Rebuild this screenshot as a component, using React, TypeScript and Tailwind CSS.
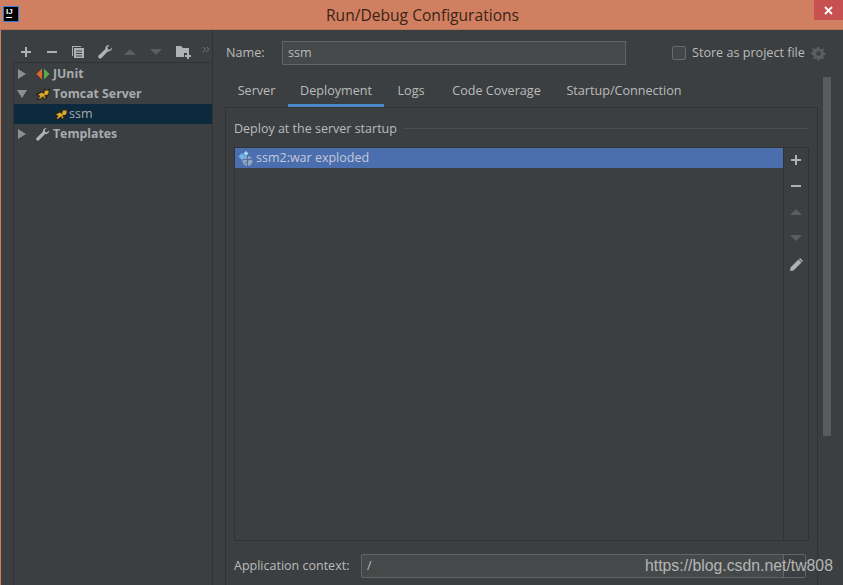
import React from 'react';

const uiFont = 'font-["Open_Sans","Noto_Sans",sans-serif]';

function Plus({ className = '' }: { className?: string }) {
  return (
    <svg width="12" height="12" viewBox="0 0 12 12" className={className}>
      <path d="M5 1h2v4h4v2H7v4H5V7H1V5h4z" fill="#afb1b3" />
    </svg>
  );
}

function Minus() {
  return (
    <svg width="12" height="12" viewBox="0 0 12 12">
      <path d="M1 5h10v2H1z" fill="#afb1b3" />
    </svg>
  );
}

function Triangle({ down = false }: { down?: boolean }) {
  return (
    <svg width="14" height="12" viewBox="0 0 14 12">
      <path d={down ? 'M1 3h12L7 9z' : 'M7 3l6 6H1z'} fill="#5b5d5f" />
    </svg>
  );
}

function Wrench({ size = 16 }: { size?: number }) {
  return (
    <svg width={size} height={size} viewBox="0 0 16 16">
      <path
        d="M15 3.600c.3 2.400-1.800 4.400-4.300 3.800L4.300 14.200c-.6.6-1.700.6-2.300 0l-.4-.4c-.6-.6-.6-1.600 0-2.200l6.800-6.500C7.900 2.900 10 .7 12.400 1l-2 2.200.5 2 2 .5z"
        fill="#afb1b3"
      />
    </svg>
  );
}

function Tomcat() {
  return (
    <svg width="14" height="12" viewBox="0 0 14 12">
      <path d="M8 0l2 1.500h1.500L13.500 0v6l-2 2-1 3.500H7.500L6.500 10 3 12H0l3-3 .5-2L0 7.500V6l5-2.500L8 3z" fill="#26251c" />
      <path d="M9 2.500h3.500v3L11 7H9L8 5.500zM2 6.500l4-2 2 1.500 1 1.500-3 1.500-1.500 1.500H2.500l2-2.500z" fill="#dba92e" />
      <path d="M7 8.500l2-1 .5 3H8z" fill="#b98a24" />
    </svg>
  );
}

function JUnit() {
  return (
    <svg width="14" height="12" viewBox="0 0 14 12">
      <path d="M6 0.500v11L0.500 6z" fill="#e0672d" />
      <path d="M8 0.500v11l5.500-5.500z" fill="#5aa84a" />
    </svg>
  );
}

function Arrow({ down = false }: { down?: boolean }) {
  return (
    <svg width="10" height="10" viewBox="0 0 10 10">
      <path d={down ? 'M0 1h10L5 9z' : 'M1 0l8 5-8 5z'} fill="#8c8e90" />
    </svg>
  );
}

function TreeRow({
  label,
  icon,
  arrow,
  down,
}: {
  label: string;
  icon: React.ReactNode;
  arrow?: boolean;
  down?: boolean;
}) {
  return (
    <div className="flex h-5 items-center">
      <div className="flex w-[15px] justify-center">{arrow && <Arrow down={down} />}</div>
      <div className="ml-[6px] flex w-[15px] justify-center">{icon}</div>
      <span className="ml-[3px] text-[12.3px] font-bold text-[#a9abad]">{label}</span>
    </div>
  );
}

function Tab({ label, width, active }: { label: string; width: string; active?: boolean }) {
  return (
    <div
      className={`flex h-[29px] items-center justify-center border-b-[3px] text-[12.6px] leading-none ${width} ${
        active ? 'border-[#4a88c7]' : 'border-transparent'
      }`}
    >
      {label}
    </div>
  );
}

export default function App() {
  return (
    <div className={`flex h-[585px] w-[843px] flex-col overflow-hidden bg-[#3c3f41] text-[#bbbbbb] ${uiFont}`}>
      {/* title bar */}
      <div className="flex h-[30px] shrink-0 items-start border-b border-[#b5765c] bg-[#d07f60]">
        <div className="ml-[3px] mt-[6px] flex h-4 w-4 flex-col border border-[#2f7fe0] bg-black px-[2px] font-['Liberation_Sans',sans-serif] text-[8px] font-bold leading-[9px] text-white">
          IJ
          <div className="mt-[1px] h-[1px] w-[6px] bg-white" />
        </div>
        <div className="flex-1 pl-[12px] pt-[5px] text-center text-[15.6px] leading-5 text-[#3a2418]">Run/Debug Configurations</div>
        <div className="flex h-5 w-[29px] items-center justify-center bg-[#c75050]">
          <svg width="9" height="9" viewBox="0 0 9 9">
            <path d="M1 1l7 7M8 1L1 8" stroke="#fff" strokeWidth="1.800" />
          </svg>
        </div>
      </div>

      <div className="flex min-h-0 flex-1 border-l border-[#d07f60]">
        {/* left column */}
        <div className="flex w-[211px] shrink-0 flex-col pl-[12px] pt-[12px]">
          <div className="flex h-5 items-center pl-[7px]">
            <div className="flex w-[26px]"><Plus /></div>
            <div className="flex w-[25px]"><Minus /></div>
            <svg width="14" height="14" viewBox="0 0 14 14" className="mr-[12px]">
              <path d="M1 1h9v1H2v9H1z" fill="#afb1b3" />
              <path d="M3 3h10v10H3zM5 5.500v1h6v-1zM5 8v1h6V8zM5 10.500v1h6v-1z" fill="#afb1b3" fillRule="evenodd" />
            </svg>
            <div className="mr-[10px] flex"><Wrench /></div>
            <div className="mr-[12px] flex"><Triangle /></div>
            <div className="mr-[12px] flex"><Triangle down /></div>
            <svg width="16" height="14" viewBox="0 0 16 14" className="mr-[11px]">
              <path d="M1 1h5l2 2h6v5H9v4H1z" fill="#afb1b3" />
              <path d="M12 8h2v2h2v2h-2v2h-2v-2h-2v-2h2z" fill="#afb1b3" />
            </svg>
            <svg width="8" height="7" viewBox="0 0 8 7" className="mb-[6px]">
              <path d="M1 1l2.500 2.500L1 6M4.500 1L7 3.500 4.500 6" fill="none" stroke="#77797b" />
            </svg>
          </div>
          <div className="min-h-0 flex-1 border-l border-t border-[#323232] pt-[1px]">
            <TreeRow label="JUnit" arrow icon={<JUnit />} />
            <TreeRow label="Tomcat Server" arrow down icon={<Tomcat />} />
            <div className="flex h-5 items-center bg-[#0d293e] pl-[40px] text-[12.5px]">
              <Tomcat />
              <span className="ml-[1px] text-[#a9abad]">ssm</span>
            </div>
            <TreeRow label="Templates" arrow icon={<Wrench size={15} />} />
          </div>
        </div>

        {/* right column */}
        <div className="flex min-w-0 flex-1 flex-col border-l border-[#323232]">
          <div className="mt-[11px] flex h-[24px] items-center pl-[13px] text-[12.6px]">
            <span className="w-[56px]">Name:</span>
            <div className="flex h-6 w-[344px] items-center border border-[#646464] bg-[#45494a] px-[5px]">ssm</div>
            <div className="ml-[46px] h-[14px] w-[14px] rounded-[2px] border border-[#6b6b6b] bg-[#43474a]" />
            <span className="ml-[6px]">Store as project file</span>
            <svg width="15" height="15" viewBox="0 0 16 16" className="ml-[6px]">
              <path
                d="M7 1h2l.4 2 1.400.6 1.700-1.100 1.400 1.400-1.100 1.700.6 1.400 2 .4v2l-2 .4-.6 1.400 1.100 1.700-1.400 1.400-1.700-1.100-1.400.6-.4 2H7l-.4-2-1.400-.6-1.700 1.100-1.400-1.400 1.100-1.700L1.600 9.400l-2-.4V7l2-.4.6-1.400-1.100-1.700 1.400-1.400 1.700 1.100 1.400-.6zM8 5.500a2.500 2.500 0 100 5 2.500 2.500 0 000-5z"
                fill="#5b5d5f"
                fillRule="evenodd"
              />
            </svg>
          </div>

          <div className="mt-[12px] flex min-h-0 flex-1">
            <div className="flex min-w-0 flex-1 flex-col pl-[12px] pt-[1px]">
              <div className="flex">
                <Tab label="Server" width="w-[63px]" />
                <Tab label="Deployment" width="w-[96px]" active />
                <Tab label="Logs" width="w-[54px]" />
                <Tab label="Code Coverage" width="w-[117px]" />
                <Tab label="Startup/Connection" width="w-[138px]" />
              </div>
              <div className="flex min-h-0 flex-1 flex-col border-l border-r border-t border-[#323232] pl-[8px] pr-[8px]">
                <div className="flex h-[39px] items-center pt-[3px] text-[12.5px]">
                  <span>Deploy at the server startup</span>
                  <div className="ml-[6px] mt-[-2px] h-px flex-1 bg-[#4d4d4d]" />
                </div>
                <div className="flex h-[394px] border border-[#323232]">
                  <div className="min-w-0 flex-1">
                    <div className="flex h-5 items-center bg-[#4b6eaf] pl-[2px] pt-[1px] text-[12.5px]">
                      <svg width="17" height="17" viewBox="0 0 17 17">
                        <path d="M5 3l3.500 3.500L5 10 1.500 6.500z" fill="#6fb7e8" />
                        <path d="M9 1l2.500 2.500L9 6 6.500 3.500z" fill="#a5d3f2" />
                        <circle cx="10.500" cy="11" r="5" fill="#93a6ba" />
                        <path d="M6 9.500h9M7.500 14l6-6M10.500 6v10" stroke="#4b6eaf" strokeWidth="1" />
                      </svg>
                      <span className="ml-[2px] text-[#c3cad6]">ssm2:war exploded</span>
                    </div>
                  </div>
                  <div className="flex w-[25px] flex-col items-center gap-[14px] border-l border-[#323232] pt-[6px]">
                    <Plus />
                    <Minus />
                    <Triangle />
                    <Triangle down />
                    <svg width="14" height="14" viewBox="0 0 14 14">
                      <path d="M1 13l.5-3.500L9.500 1.500l3 3-8 8zM10 1l1-1 3 3-1 1z" fill="#afb1b3" />
                    </svg>
                  </div>
                </div>
                <div className="mt-[13px] flex h-[24px] items-center text-[12.5px]">
                  <span className="w-[127px]">Application context:</span>
                  <div className="flex h-6 w-[445px] items-center rounded-[2px] border border-[#646464] bg-[#45494a]">
                    <span className="flex-1 pl-[5px]">/</span>
                    <div className="h-full w-[22px] border-l border-[#646464] bg-[#3c3f41]" />
                  </div>
                </div>
              </div>
            </div>
            {/* scrollbar */}
            <div className="w-[25px] shrink-0 pl-[5px]">
              <div className="h-[359px] w-[8px] bg-[#595b5d]" />
            </div>
          </div>
        </div>
      </div>

      {/* watermark */}
      <div className="absolute left-[645px] top-[556px] font-['Liberation_Sans',sans-serif] text-[15.8px] leading-5 text-[#b5b6b7]">
        https://blog.csdn.net/tw808
      </div>
    </div>
  );
}
